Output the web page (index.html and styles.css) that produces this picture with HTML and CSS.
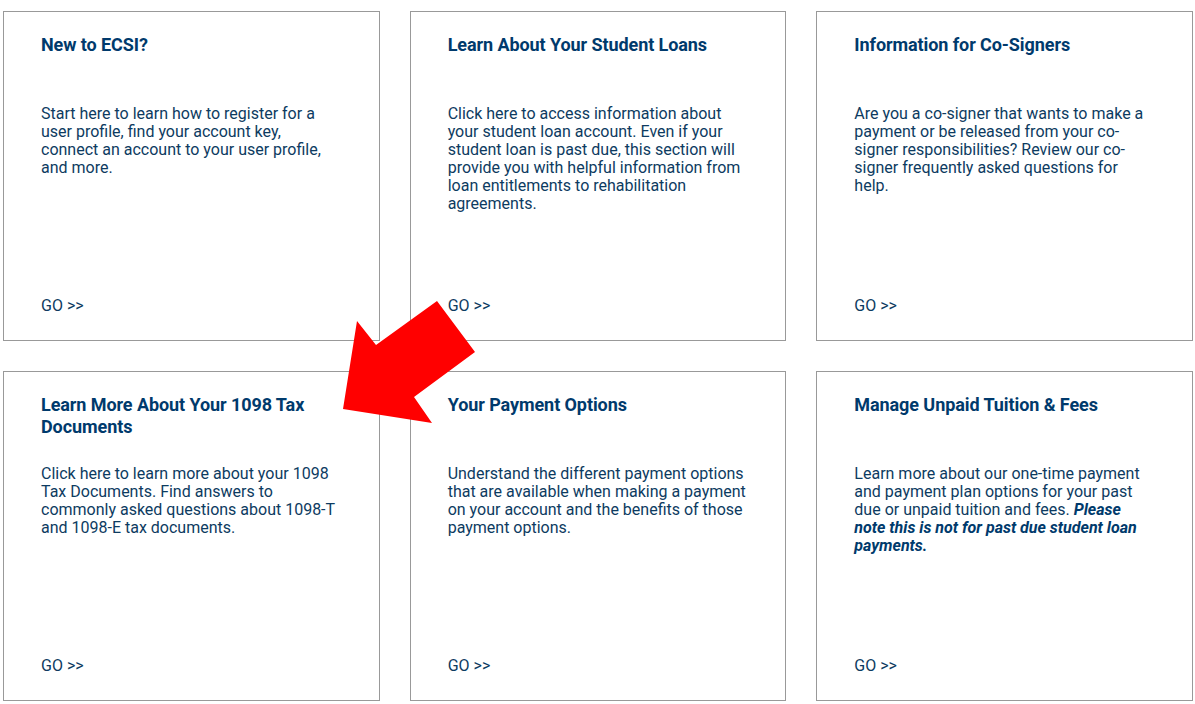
FILE: index.html
```html
<!DOCTYPE html>
<html lang="en">
<head>
    <meta charset="UTF-8">
    <meta name="viewport" content="width=device-width, initial-scale=1.0">
    <title>ECSI - Help Topics</title>
    <link rel="stylesheet" href="styles.css">
</head>
<body>
    <div class="tiles">
        <div class="tile">
            <h3>New to ECSI?</h3>
            <p>Start here to learn how to register for a user profile, find your account key, connect an account to your user profile, and more.</p>
            <a class="go" href="#">GO &gt;&gt;</a>
        </div>

        <div class="tile">
            <h3>Learn About Your Student Loans</h3>
            <p>Click here to access information about your student loan account. Even if your student loan is past due, this section will provide you with helpful information from loan entitlements to rehabilitation agreements.</p>
            <a class="go" href="#">GO &gt;&gt;</a>
        </div>

        <div class="tile">
            <h3>Information for Co-Signers</h3>
            <p>Are you a co-signer that wants to make a payment or be released from your co-signer responsibilities? Review our co-signer frequently asked questions for help.</p>
            <a class="go" href="#">GO &gt;&gt;</a>
        </div>

        <div class="tile">
            <h3>Learn More About Your 1098 Tax Documents</h3>
            <p>Click here to learn more about your 1098 Tax Documents. Find answers to commonly asked questions about 1098-T and 1098-E tax documents.</p>
            <a class="go" href="#">GO &gt;&gt;</a>
        </div>

        <div class="tile">
            <h3>Your Payment Options</h3>
            <p>Understand the different payment options that are available when making a payment on your account and the benefits of those payment options.</p>
            <a class="go" href="#">GO &gt;&gt;</a>
        </div>

        <div class="tile">
            <h3>Manage Unpaid Tuition &amp; Fees</h3>
            <p>Learn more about our one-time payment and payment plan options for your past due or unpaid tuition and fees. <strong><em>Please note this is not for past due student loan payments.</em></strong></p>
            <a class="go" href="#">GO &gt;&gt;</a>
        </div>

        <!-- callout pointing at the 1098 tile -->
        <svg class="pointer" width="140" height="130" viewBox="340 300 140 130">
            <polygon fill="#ff0000" points="437,301 475,352 414,397 432,423 343,409 357,321 376,345"/>
        </svg>
    </div>
</body>
</html>
```

FILE: styles.css
```css
body {
    margin: 0;
    background: #fff;
    font-family: Roboto, "Liberation Sans", Arial, sans-serif;
}

.tiles {
    position: relative;
    width: 1190px;
    margin: 11px 0 0 3px;
    display: grid;
    grid-template-columns: repeat(3, 1fr);
    column-gap: 30px;
    row-gap: 30px;
}

.tile {
    height: 330px;
    box-sizing: border-box;
    border: 1px solid #999;
    padding: 22px 38px 25px 37px;
    display: flex;
    flex-direction: column;
}

.tile h3 {
    margin: 0;
    min-height: 44px;
    font-size: 18px;
    line-height: 22px;
    font-weight: 700;
    color: #003a6c;
    letter-spacing: -0.08px;
}

.tile p {
    margin: 27px 0 0;
    font-size: 16px;
    line-height: 18px;
    color: #0d3b61;
}

.tile p strong {
    color: #003a6c;
}

.go {
    margin-top: auto;
    font-size: 16px;
    line-height: 18px;
    color: #0d3b61;
    text-decoration: none;
}

.pointer {
    position: absolute;
    left: 337px;
    top: 289px;
}
```
